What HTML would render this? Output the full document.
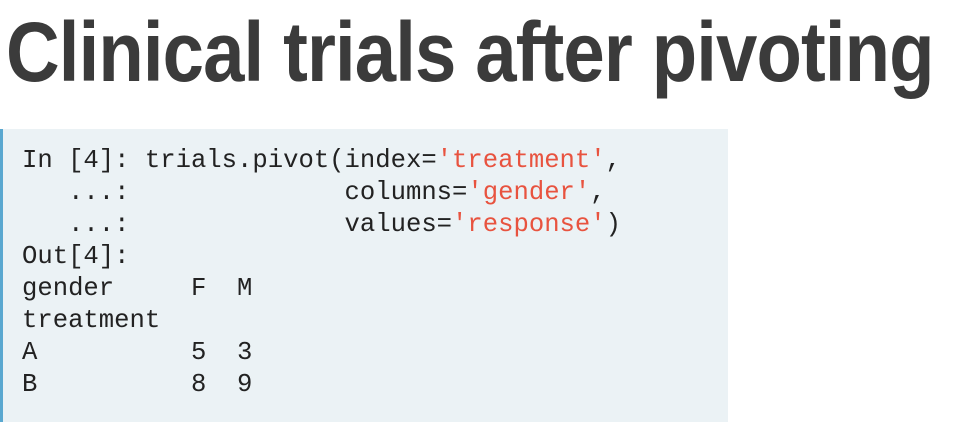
<!DOCTYPE html>
<html><head><style>
html,body{margin:0;padding:0;width:960px;height:422px;overflow:hidden;background:#fff}
h1{position:absolute;left:6px;top:2px;margin:0;font-family:"Liberation Sans",sans-serif;font-weight:bold;font-size:84px;color:#3b3b3b;white-space:nowrap;transform-origin:0 0;transform:scaleX(0.885);letter-spacing:-1px;line-height:100px}
.code{position:absolute;left:0;top:129px;width:725px;height:293px;background:#ebf2f5;border-left:3px solid #5aa8d0}
pre{margin:0;position:absolute;left:19px;top:16px;font-family:"Liberation Mono",monospace;font-size:25.6px;line-height:32px;color:#222}
.s{color:#e8533f}
</style></head><body>
<h1>Clinical trials after pivoting</h1>
<div class="code"><pre>In [4]: trials.pivot(index=<span class="s">'treatment'</span>,
   ...:              columns=<span class="s">'gender'</span>,
   ...:              values=<span class="s">'response'</span>)
Out[4]:
gender     F  M
treatment
A          5  3
B          8  9</pre></div>
</body></html>
